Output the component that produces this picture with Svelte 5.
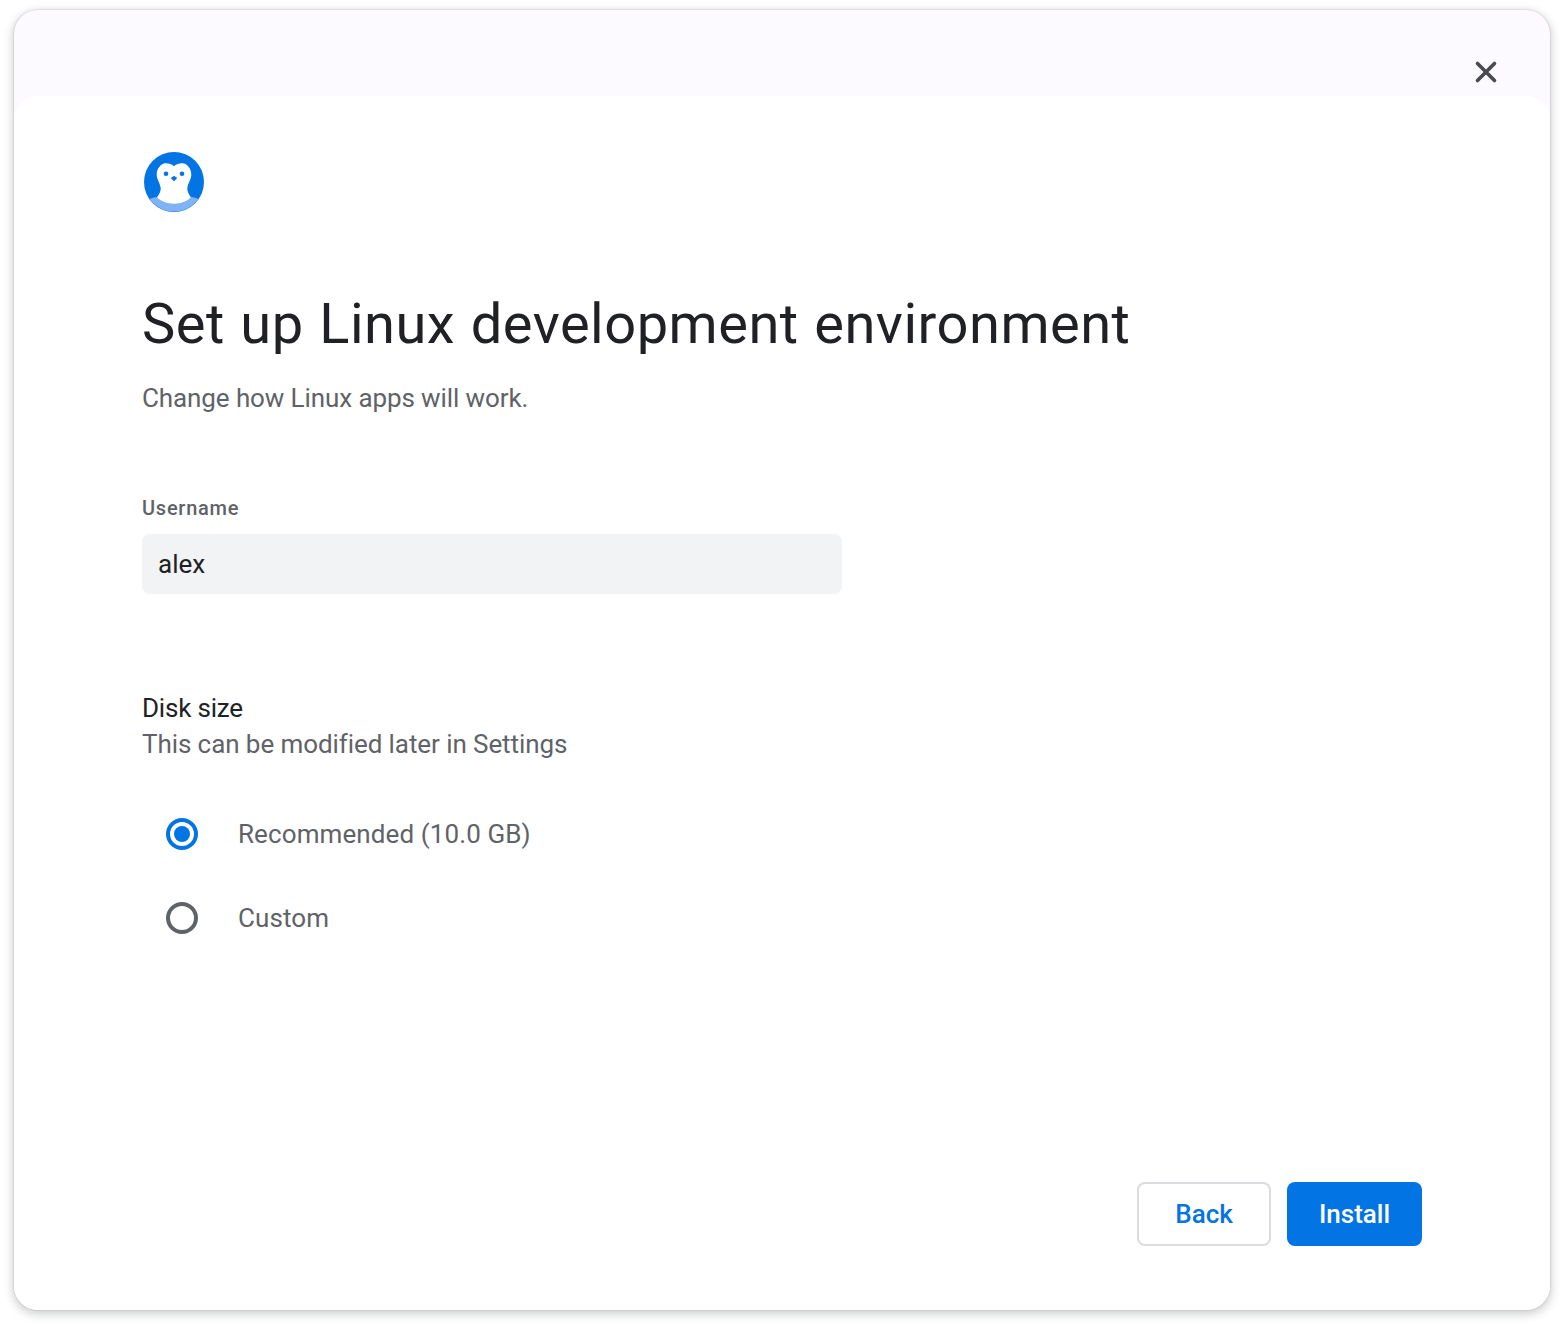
<script>
  let username = $state("alex");
  let diskChoice = $state("recommended");
</script>

<div class="page">
  <div class="window">
    <header class="topbar">
      <button class="close" aria-label="Close">
        <svg width="24" height="24" viewBox="0 0 24 24">
          <path d="M3.5 3.5 20.5 20.5M20.5 3.5 3.5 20.5" fill="none" stroke="#484a50" stroke-width="3.6" stroke-linecap="round" />
        </svg>
      </button>
    </header>

    <main class="content">
      <svg class="logo" width="64" height="64" viewBox="0 0 64 64">
        <circle cx="32" cy="32" r="30" fill="#0274e3" />
        <path d="M7.6 49A30 30 0 0 0 56.4 49C53 47.5 51 47 49 47.3H15C13 47 11 47.5 7.6 49Z" fill="#7fb3f5" />
        <path d="M32 16.3C34.5 14 37.5 13.2 40.3 13.3 45.5 13.5 49.3 19 49.3 24.7 49.3 29 46 33 45.3 38 45 41 46.8 44.5 49 47.3 45 51.5 39 53.7 32 53.7S19 51.5 15 47.3C17.2 44.5 19 41 18.7 38 18 33 14.7 29 14.7 24.7 14.7 19 18.5 13.5 23.7 13.3 26.5 13.2 29.5 14 32 16.3Z" fill="#fff" />
        <circle cx="24" cy="23.7" r="2.3" fill="#0274e3" />
        <circle cx="40" cy="23.7" r="2.3" fill="#0274e3" />
        <path d="M32 25.8Q33 26.8 35.3 28 33.5 30 32 31.2 30.5 30 28.7 28 31 26.8 32 25.8Z" fill="#0274e3" />
      </svg>

      <h1>Set up Linux development environment</h1>
      <p class="subtitle">Change how Linux apps will work.</p>

      <label class="field">
        <span class="field-label">Username</span>
        <input type="text" bind:value={username} />
      </label>

      <section class="disk">
        <div class="disk-title">Disk size</div>
        <div class="disk-hint">This can be modified later in Settings</div>

        <div class="radios">
          <label class="radio">
            <input type="radio" value="recommended" bind:group={diskChoice} />
            <span class="dot"></span>
            <span>Recommended (10.0 GB)</span>
          </label>
          <label class="radio">
            <input type="radio" value="custom" bind:group={diskChoice} />
            <span class="dot"></span>
            <span>Custom</span>
          </label>
        </div>
      </section>

      <footer class="actions">
        <button class="btn back">Back</button>
        <button class="btn install">Install</button>
      </footer>
    </main>
  </div>
</div>

<style>
  :global(body) {
    background: #fff;
  }

  .page {
    width: 1564px;
    height: 1328px;
    padding: 10px 14px 18px;
    box-sizing: border-box;
    font-family: Roboto, "Liberation Sans", sans-serif;
  }

  .window {
    height: 100%;
    display: flex;
    flex-direction: column;
    background: #fcfaff;
    border-radius: 24px;
    overflow: hidden;
    box-shadow: 0 0 1px 1px rgba(60, 64, 67, 0.1), 0 3px 8px 2px rgba(60, 64, 67, 0.22);
  }

  .topbar {
    height: 86px;
    flex: none;
    display: flex;
    justify-content: flex-end;
    align-items: flex-start;
    padding: 50px 52px 0 0;
    box-sizing: border-box;
  }

  .close {
    width: 24px;
    height: 24px;
    padding: 0;
    border: none;
    background: none;
    display: block;
  }

  .close svg {
    display: block;
  }

  .content {
    flex: 1;
    display: flex;
    flex-direction: column;
    background: #fff;
    border-radius: 24px 24px 0 0;
    padding: 54px 128px 64px;
    position: relative;
    z-index: 1;
  }

  .logo {
    display: block;
  }

  h1 {
    margin: 76px 0 0;
    font-size: 56px;
    line-height: 68px;
    font-weight: 400;
    letter-spacing: 0.5px;
    word-spacing: 1.2px;
    color: #202124;
  }

  .subtitle {
    margin: 20px 0 0;
    font-size: 26px;
    line-height: 40px;
    letter-spacing: -0.1px;
    color: #5f6368;
  }

  .field {
    display: block;
    margin-top: 74px;
    width: 700px;
  }

  .field-label {
    display: block;
    font-size: 20px;
    line-height: 32px;
    font-weight: 500;
    letter-spacing: 0.75px;
    color: #5f6368;
  }

  .field input {
    display: block;
    width: 100%;
    height: 60px;
    margin-top: 10px;
    padding: 0 16px;
    box-sizing: border-box;
    border: none;
    border-radius: 8px;
    background: #f1f3f4;
    font-family: inherit;
    font-size: 26px;
    color: #202124;
    outline: none;
  }

  .disk {
    margin-top: 96px;
  }

  .disk-title {
    font-size: 26px;
    line-height: 36px;
    letter-spacing: -0.2px;
    color: #202124;
  }

  .disk-hint {
    font-size: 26px;
    line-height: 36px;
    letter-spacing: -0.08px;
    color: #5f6368;
  }

  .radios {
    margin-top: 30px;
    display: flex;
    flex-direction: column;
  }

  .radio {
    height: 84px;
    display: flex;
    align-items: center;
    gap: 40px;
    padding-left: 24px;
    font-size: 26px;
    letter-spacing: 0.1px;
    color: #5f6368;
  }

  .radio input {
    position: absolute;
    opacity: 0;
    width: 0;
    height: 0;
  }

  .dot {
    width: 32px;
    height: 32px;
    box-sizing: border-box;
    border: 4px solid #5f6368;
    border-radius: 50%;
    display: flex;
    align-items: center;
    justify-content: center;
  }

  .radio input:checked + .dot {
    border-color: #0274e3;
  }

  .radio input:checked + .dot::after {
    content: "";
    width: 16px;
    height: 16px;
    border-radius: 50%;
    background: #0274e3;
  }

  .actions {
    margin-top: auto;
    display: flex;
    justify-content: flex-end;
    gap: 16px;
  }

  .btn {
    height: 64px;
    border-radius: 8px;
    font-family: inherit;
    font-size: 26px;
    font-weight: 500;
    box-sizing: border-box;
  }

  .back {
    width: 134px;
    background: #fff;
    color: #0274e3;
    border: 2px solid #dadce0;
  }

  .install {
    width: 135px;
    background: #0274e3;
    color: #fff;
    border: none;
  }
</style>
